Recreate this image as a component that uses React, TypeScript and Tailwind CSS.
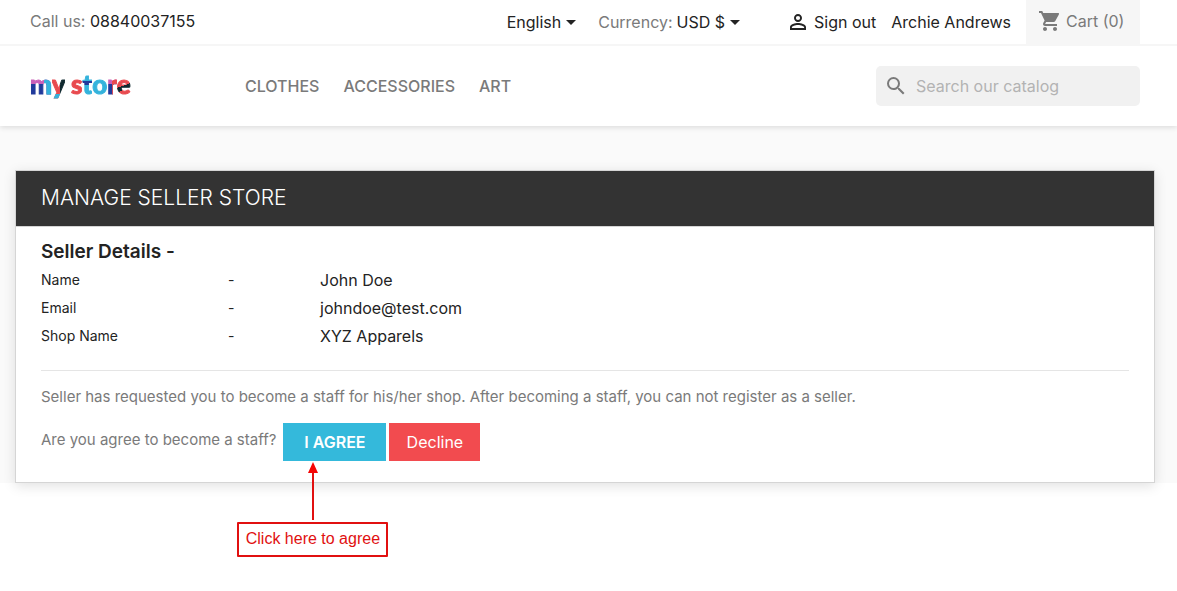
import { MdPersonOutline, MdSearch, MdShoppingCart } from 'react-icons/md'

const NAV_LINKS = ['Clothes', 'Accessories', 'Art']

const SELLER_DETAILS = [
  { label: 'Name', value: 'John Doe' },
  { label: 'Email', value: 'johndoe@test.com' },
  { label: 'Shop Name', value: 'XYZ Apparels' },
]

// each letter is painted with its own hard-edged gradient
const LOGO_LETTERS = [
  { char: 'm', paint: 'bg-[linear-gradient(90deg,transparent_0_62%,#34b3dc_62%),linear-gradient(180deg,#c95fb8_0_51%,#213a9b_51%)]' },
  { char: 'y', paint: 'bg-[linear-gradient(180deg,transparent_0_80%,#34b3dc_80%),linear-gradient(90deg,#e84a4f_0_60%,#10292f_60%)]' },
  { char: ' ', paint: '' },
  { char: 's', paint: 'bg-[#e84a4f]' },
  { char: 't', paint: 'bg-[linear-gradient(180deg,#34b3dc_0_40%,#213a9b_40%_52%,#34b3dc_52%)]' },
  { char: 'o', paint: 'bg-[#34b3dc]' },
  { char: 'r', paint: 'bg-[linear-gradient(90deg,transparent_0_55%,#e84a4f_55%),linear-gradient(180deg,#c95fb8_0_51%,#213a9b_51%)]' },
  { char: 'e', paint: 'bg-[linear-gradient(160deg,#e84a4f_0_54%,#10292f_54%_66%,#e84a4f_66%)]' },
]

function Logo() {
  return (
    <a href="#" className="block whitespace-pre pb-1 font-[Lato] text-[26px] font-black leading-8">
      {LOGO_LETTERS.map((l, i) => (
        <span key={i} className={`bg-clip-text text-transparent [-webkit-text-stroke:1px_transparent] ${l.paint}`}>{l.char}</span>
      ))}
    </a>
  )
}

function Dropdown({ id, name, label, value }: { id: string; name: string; label?: string; value: string }) {
  return (
    <div className="flex items-center">
      {label && <label htmlFor={id} className="mr-1 text-[#7a7a7a]">{label}</label>}
      <select
        id={id}
        aria-label={name}
        className="field-sizing-content h-8 cursor-pointer appearance-none bg-transparent leading-8 text-[#232323]"
      >
        <option>{value}</option>
      </select>
      <svg viewBox="0 0 10 5" className="pointer-events-none ml-[5px] h-[5px] w-[10px] fill-[#232323]">
        <path d="M0 0h10L5 5z" />
      </svg>
    </div>
  )
}

function TopBar() {
  return (
    <div className="flex h-[46px] items-start justify-between border-b-2 border-[#f6f6f6] pl-[30px] pr-[37px]">
      <p className="leading-[42px] text-[#7a7a7a]">
        Call us: <span className="text-[#232323]">08840037155</span>
      </p>
      <div className="flex h-11 items-center">
        <Dropdown id="language" name="Language" value="English" />
        <div className="ml-[22px]">
          <Dropdown id="currency" name="Currency" label="Currency:" value="USD $" />
        </div>
        <a href="#" className="ml-[46px] flex items-center gap-1 text-[#232323]">
          <MdPersonOutline size={24} />
          Sign out
        </a>
        <a href="#" className="ml-[15px] text-[#232323]">Archie Andrews</a>
        <a href="#" className="ml-[15px] flex h-11 w-[114px] items-center gap-1 bg-[#f6f6f6] pb-[3px] pl-3 text-[#7a7a7a]">
          <MdShoppingCart size={24} />
          Cart (0)
        </a>
      </div>
    </div>
  )
}

function MainMenu() {
  return (
    <div className="flex h-20 items-center pl-[30px] pr-[37px]">
      <div className="w-[215px]">
        <Logo />
      </div>
      <nav className="flex flex-1 gap-6">
        {NAV_LINKS.map((link) => (
          <a key={link} href="#" className="font-medium uppercase text-[#7a7a7a]">{link}</a>
        ))}
      </nav>
      <label className="flex h-10 w-[264px] items-center gap-2 rounded-[5px] bg-[#f1f1f1] px-2 text-[#7a7a7a]">
        <MdSearch size={24} className="shrink-0" />
        <input
          type="text"
          aria-label="Search"
          placeholder="Search our catalog"
          className="w-full bg-transparent outline-none placeholder:text-[#b3b3b3]"
        />
      </label>
    </div>
  )
}

// callout that hangs under the agree button
function AgreeHint() {
  return (
    <div className="absolute -left-[46px] top-full flex w-[151px] flex-col items-center">
      <svg viewBox="0 0 10 61" className="h-[61px] w-[10px]">
        <path d="M5 10V59" stroke="#e11010" strokeWidth="2" />
        <path d="M5 1l5 11H0z" fill="#f50505" />
      </svg>
      <div className="h-[35px] w-full whitespace-nowrap rounded-[1px] border-2 border-[#e11010] text-center font-['Liberation_Sans',sans-serif] text-base leading-[30px] text-[#e11010]">
        Click here to agree
      </div>
    </div>
  )
}

function SellerStoreCard() {
  return (
    <section className="border border-[#d5d5d5] bg-white shadow-[0_3px_12px_rgba(0,0,0,0.12)]">
      <h1 className="border-b border-[#d5d5d5] bg-[#333] px-[25px] pb-px text-[21px] font-light uppercase leading-[54px] text-white">
        Manage Seller Store
      </h1>
      <div className="px-[25px] pb-[21px] pt-[11px]">
        <h2 className="text-[19px] font-semibold leading-7 text-[#232323]">Seller Details -</h2>
        <table className="w-full text-left text-[#232323]">
          <tbody>
            {SELLER_DETAILS.map((d) => (
              <tr key={d.label} className="h-7">
                <th scope="row" className="w-[187px] text-sm font-normal">{d.label}</th>
                <td className="w-[92px] text-sm">-</td>
                <td>{d.value}</td>
              </tr>
            ))}
          </tbody>
        </table>
        <hr className="mt-5 border-[#e5e5e5]" />
        <p className="mt-3 text-[15px] leading-7 text-[#7a7a7a]">
          Seller has requested you to become a staff for his/her shop. After becoming a staff, you can not register as a seller.
        </p>
        <div className="mt-3 flex h-[38px] items-center text-[#7a7a7a]">
          <p className="pb-[3px] text-[15px]">Are you agree to become a staff?</p>
          <div className="relative ml-[7px]">
            <button type="button" className="h-[38px] w-[103px] bg-[#34b9db] font-semibold uppercase text-white">
              I agree
            </button>
            <AgreeHint />
          </div>
          <button type="button" className="ml-[3px] h-[38px] w-[91px] bg-[#f24b4f] text-white">
            Decline
          </button>
        </div>
      </div>
    </section>
  )
}

export default function App() {
  return (
    <div className="min-h-screen bg-white font-[Inter,sans-serif] text-base font-normal">
      <header className="relative bg-white shadow-[0_2px_5px_rgba(0,0,0,0.11)]">
        <TopBar />
        <MainMenu />
      </header>
      <main className="bg-[#fafafa] pl-[15px] pr-[22px] pt-11">
        <SellerStoreCard />
      </main>
    </div>
  )
}
